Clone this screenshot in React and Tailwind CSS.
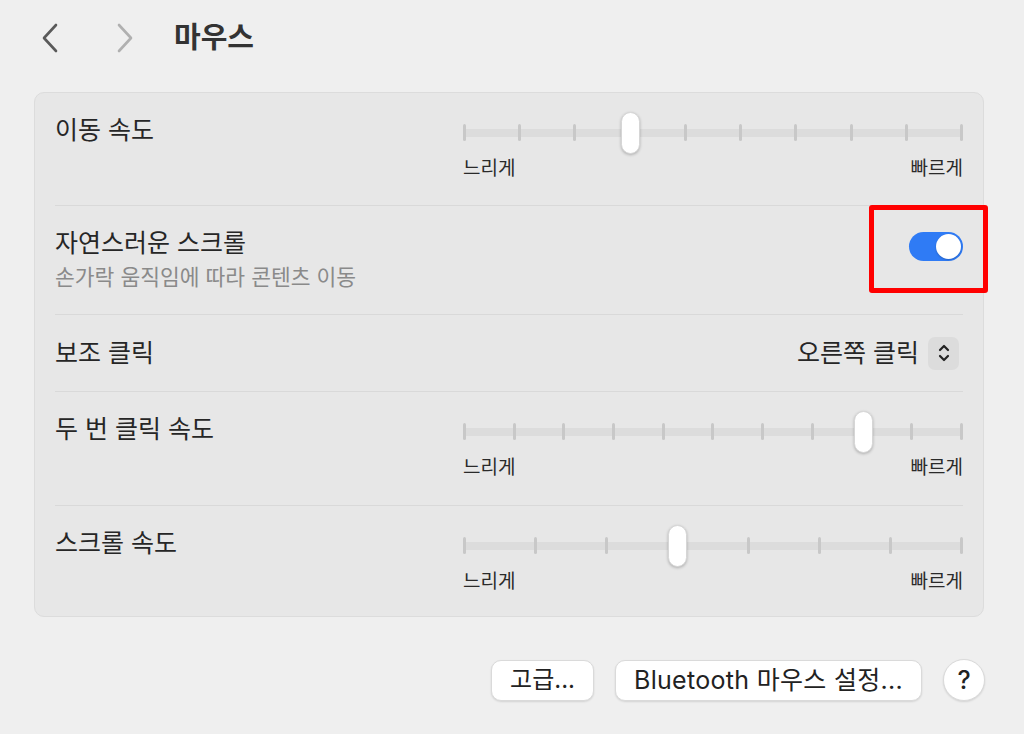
import React from "react";

const font = "font-['Inter','Noto_Sans_CJK_KR',sans-serif]";

function Slider({ ticks, value }) {
  const pct = (value / (ticks - 1)) * 100;
  return (
    <div className="w-[500px]">
      <div className="relative h-[42px]">
        {/* track */}
        <div className="absolute left-0 right-0 top-[17px] h-[8px] bg-[#dcdcdc] rounded-[2px]" />
        {/* ticks */}
        <div className="absolute left-0 right-0 top-[12px] flex justify-between">
          {Array.from({ length: ticks }).map((_, i) => (
            <div key={i} className="w-[3px] h-[17px] rounded-full bg-[#c8c8c8]" />
          ))}
        </div>
        {/* thumb */}
        <div
          className="absolute top-0 w-[19px] h-[42px] -ml-[9px] rounded-full bg-white shadow-[0_1px_3px_rgba(0,0,0,0.25)] border border-[#d6d6d6]"
          style={{ left: `${pct}%` }}
        />
      </div>
      <div className="mt-[3px] flex justify-between text-[19px] leading-[24px] text-[#2a2a2a]">
        <span>느리게</span>
        <span>빠르게</span>
      </div>
    </div>
  );
}

function SliderRow({ label, ticks, value, height }) {
  return (
    <div className={`flex items-start justify-between pl-5 pr-[20px] ${height}`}>
      <div className="pt-[22px] text-[25px] leading-[30px] text-[#262626]">{label}</div>
      <div className="pt-[19px]">
        <Slider ticks={ticks} value={value} />
      </div>
    </div>
  );
}

function Divider() {
  return <div className="mx-5 h-px bg-[#d9d9d9]" />;
}

export default function App() {
  return (
    <div className={`w-[1024px] h-[734px] bg-[#efefef] ${font} overflow-hidden`}>
      {/* header */}
      <div className="flex items-center h-[74px] pl-[41px]">
        <svg width="18" height="30" viewBox="0 0 18 30" className="mt-[1px]">
          <path d="M15 2 L3 15 L15 28" fill="none" stroke="#5a5a5a" strokeWidth="2.6" strokeLinecap="round" strokeLinejoin="round" />
        </svg>
        <svg width="18" height="30" viewBox="0 0 18 30" className="ml-[57px] mt-[1px]">
          <path d="M3 2 L15 15 L3 28" fill="none" stroke="#b0b0b0" strokeWidth="2.6" strokeLinecap="round" strokeLinejoin="round" />
        </svg>
        <div className="ml-[40px] text-[29px] font-semibold text-[#333] leading-none">마우스</div>
      </div>

      {/* card */}
      <div className="ml-[34px] mt-[18px] w-[950px] rounded-[10px] bg-[#e7e7e7] border border-[#dcdcdc]">
        <SliderRow label="이동 속도" ticks={10} value={3} height="h-[112px]" />
        <Divider />

        <div className="relative flex items-start justify-between pl-5 pr-[20px] h-[108px]">
          <div className="pt-[22px]">
            <div className="text-[25px] leading-[30px] text-[#262626]">자연스러운 스크롤</div>
            <div className="mt-[6px] text-[21.5px] leading-[26px] text-[#8a8a8a]">손가락 움직임에 따라 콘텐츠 이동</div>
          </div>
          <div className="mt-[26px] w-[54px] h-[29px] rounded-full bg-[#2f7bf5] p-[2px] flex justify-end">
            <div className="w-[25px] h-[25px] rounded-full bg-white shadow-[0_1px_2px_rgba(0,0,0,0.2)]" />
          </div>
          <div className="absolute left-[834px] top-[-1px] w-[119px] h-[88px] border-[5px] border-[#ff0000] rounded-[3px]" />
        </div>
        <Divider />

        <div className="flex items-center justify-between pl-5 pr-[24px] h-[76px]">
          <div className="text-[25px] leading-[30px] text-[#262626]">보조 클릭</div>
          <div className="flex items-center gap-[9px]">
            <span className="text-[25px] leading-[30px] text-[#262626]">오른쪽 클릭</span>
            <div className="w-[31px] h-[33px] rounded-[7px] bg-[#dcdcdc] flex items-center justify-center">
              <svg width="14" height="22" viewBox="0 0 14 22">
                <path d="M3 8 L7 4 L11 8 M3 14 L7 18 L11 14" fill="none" stroke="#222" strokeWidth="2.2" strokeLinecap="round" strokeLinejoin="round" />
              </svg>
            </div>
          </div>
        </div>
        <Divider />

        <SliderRow label="두 번 클릭 속도" ticks={11} value={8} height="h-[113px]" />
        <Divider />

        <SliderRow label="스크롤 속도" ticks={8} value={3} height="h-[110px]" />
      </div>

      {/* footer buttons */}
      <div className="mt-[42px] pr-[39px] flex justify-end items-center gap-[21px]">
        <button className="h-[41px] px-[18px] rounded-[10px] bg-white border border-[#dadada] shadow-[0_1px_2px_rgba(0,0,0,0.12)] text-[24px] text-[#222] leading-none">
          고급...
        </button>
        <button className="h-[41px] px-[18px] rounded-[10px] bg-white border border-[#dadada] shadow-[0_1px_2px_rgba(0,0,0,0.12)] text-[25px] tracking-[0.3px] text-[#222] leading-none">
          Bluetooth 마우스 설정...
        </button>
        <button className="w-[42px] h-[42px] rounded-full bg-white border border-[#dadada] shadow-[0_1px_2px_rgba(0,0,0,0.12)] text-[25px] font-medium text-[#222] leading-none flex items-center justify-center">
          ?
        </button>
      </div>
    </div>
  );
}
